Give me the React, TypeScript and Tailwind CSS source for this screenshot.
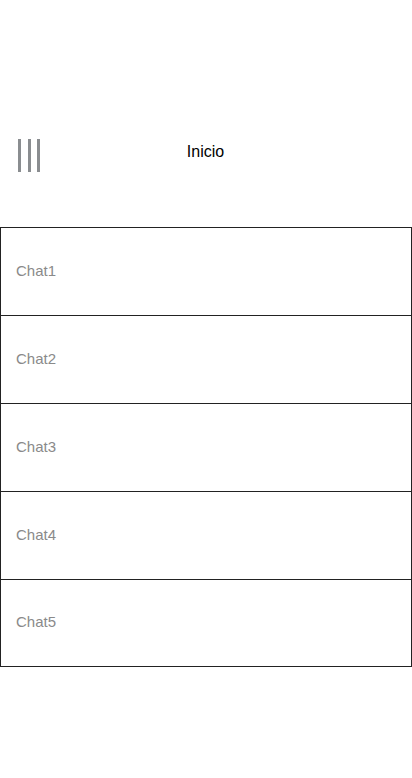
const chats = ['Chat1', 'Chat2', 'Chat3', 'Chat4', 'Chat5']

export default function App() {
  return (
    <div className="w-[412px] h-[778px] bg-white font-['Liberation_Sans',Arial,sans-serif]">
      {/* header */}
      <div className="relative h-[227px]">
        <div className="absolute left-[18px] top-[139px] flex gap-[6.5px]">
          <div className="w-[3px] h-[33px] bg-[#8a8d90]" />
          <div className="w-[3px] h-[33px] bg-[#8a8d90]" />
          <div className="w-[3px] h-[33px] bg-[#8a8d90]" />
        </div>
        <div className="absolute left-0 right-[1px] top-[142px] text-center text-[16px] leading-[20px] text-black">
          Inicio
        </div>
      </div>

      {/* chat list */}
      <div className="flex flex-col">
        {chats.map((c, i) => (
          <div
            key={c}
            className={`h-[88px] border-x border-t border-[#222] flex items-center pl-[15px] ${
              i === chats.length - 1 ? 'border-b' : ''
            }`}
          >
            <span className="text-[15px] leading-[18px] text-[#8a8a8a] -mt-[2px]">{c}</span>
          </div>
        ))}
      </div>
    </div>
  )
}
